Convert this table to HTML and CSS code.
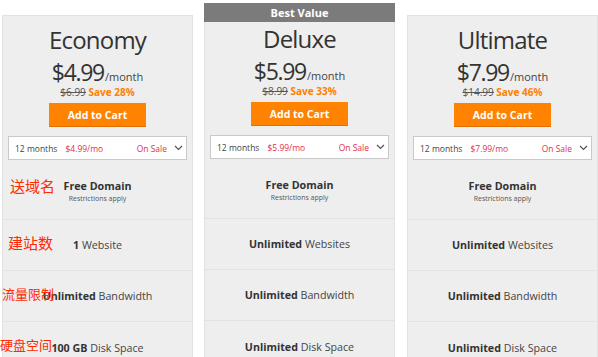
FILE: index.html
```html
<!DOCTYPE html>
<html lang="en">
<head>
<meta charset="utf-8">
<title>Hosting plans</title>
<link rel="stylesheet" href="styles.css">
</head>
<body>
<div class="plans">
  <section class="card">
    <div class="head">
      <h2 class="name">Economy</h2>
      <div class="price"><span class="amount">$4.99</span><span class="per">/month</span></div>
      <div class="was"><s>$6.99</s> <b>Save 28%</b></div>
      <button class="cart">Add to Cart</button>
      <div class="term"><span class="months">12 months</span><span class="mo">$4.99/mo</span><span class="sale">On Sale</span><svg class="chev" width="9" height="6" viewBox="0 0 9 6"><polyline points="1,1 4.5,4.5 8,1" fill="none" stroke="#555" stroke-width="1.2"/></svg></div>
    </div>
    <ul class="feats">
      <li class="feat"><b>Free Domain</b><small>Restrictions apply</small></li>
      <li class="feat"><span><b>1</b> Website</span></li>
      <li class="feat"><span><b>Unlimited</b> Bandwidth</span></li>
      <li class="feat"><span><b>100 GB</b> Disk Space</span></li>
    </ul>
    <span class="note n1">送域名</span>
    <span class="note n2">建站数</span>
    <span class="note n3">流量限制</span>
    <span class="note n4">硬盘空间</span>
  </section>
  <section class="card featured">
    <div class="badge">Best Value</div>
    <div class="head">
      <h2 class="name">Deluxe</h2>
      <div class="price"><span class="amount">$5.99</span><span class="per">/month</span></div>
      <div class="was"><s>$8.99</s> <b>Save 33%</b></div>
      <button class="cart">Add to Cart</button>
      <div class="term"><span class="months">12 months</span><span class="mo">$5.99/mo</span><span class="sale">On Sale</span><svg class="chev" width="9" height="6" viewBox="0 0 9 6"><polyline points="1,1 4.5,4.5 8,1" fill="none" stroke="#555" stroke-width="1.2"/></svg></div>
    </div>
    <ul class="feats">
      <li class="feat"><b>Free Domain</b><small>Restrictions apply</small></li>
      <li class="feat"><span><b>Unlimited</b> Websites</span></li>
      <li class="feat"><span><b>Unlimited</b> Bandwidth</span></li>
      <li class="feat"><span><b>Unlimited</b> Disk Space</span></li>
    </ul>
  </section>
  <section class="card">
    <div class="head">
      <h2 class="name">Ultimate</h2>
      <div class="price"><span class="amount">$7.99</span><span class="per">/month</span></div>
      <div class="was"><s>$14.99</s> <b>Save 46%</b></div>
      <button class="cart">Add to Cart</button>
      <div class="term"><span class="months">12 months</span><span class="mo">$7.99/mo</span><span class="sale">On Sale</span><svg class="chev" width="9" height="6" viewBox="0 0 9 6"><polyline points="1,1 4.5,4.5 8,1" fill="none" stroke="#555" stroke-width="1.2"/></svg></div>
    </div>
    <ul class="feats">
      <li class="feat"><b>Free Domain</b><small>Restrictions apply</small></li>
      <li class="feat"><span><b>Unlimited</b> Websites</span></li>
      <li class="feat"><span><b>Unlimited</b> Bandwidth</span></li>
      <li class="feat"><span><b>Unlimited</b> Disk Space</span></li>
    </ul>
  </section>
</div>
</body>
</html>
```
FILE: styles.css
```css
html, body {
  margin: 0;
  padding: 0;
  background: #fff;
  overflow: hidden;
}
body {
  font-family: "Open Sans", "Noto Sans", sans-serif;
  color: #333;
  width: 598px;
  height: 357px;
}
.plans {
  box-sizing: border-box;
  height: 357px;
  display: flex;
  align-items: stretch;
  gap: 11px;
  padding: 3px 0 0 2px;
}
.card {
  position: relative;
  width: 189px;
  margin-top: 12px;
  background: #eeeeee;
  border: 1px solid #e2e2e2;
  border-bottom: none;
  display: flex;
  flex-direction: column;
}
.card.featured {
  margin-top: 0;
}
.card + .card + .card {
  margin-left: 1px;
}
.badge {
  height: 19px;
  margin: -1px -1px 0;
  background: #7b7b7b;
  color: #fff;
  font-weight: 700;
  font-size: 11px;
  line-height: 19px;
  text-align: center;
}
.head {
  display: flex;
  flex-direction: column;
  align-items: center;
  padding-top: 9px;
}
.featured .head {
  padding-top: 2px;
}
.name {
  margin: 0;
  font-weight: 400;
  font-size: 24px;
  line-height: 30px;
  height: 30px;
  color: #333;
  letter-spacing: -0.8px;
}
.price {
  margin-top: 7px;
  line-height: 20px;
  height: 20px;
  white-space: nowrap;
}
.amount {
  font-size: 23px;
  letter-spacing: -1.3px;
}
.per {
  font-size: 11px;
  color: #444;
  margin-left: 1px;
}
.was {
  margin-top: 4px;
  font-size: 10px;
  line-height: 12px;
  color: #555;
}
.was b {
  color: #ff8000;
}
.cart {
  margin-top: 5px;
  width: 97px;
  height: 24px;
  border: none;
  border-bottom: 1px solid #e07000;
  background: #ff8300;
  color: #fff;
  font-family: inherit;
  font-weight: 700;
  font-size: 10.5px;
  padding: 0;
}
.term {
  margin: 9px 5px 0;
  align-self: stretch;
  height: 22px;
  background: #fff;
  border: 1px solid #c9c9c9;
  display: flex;
  align-items: center;
  font-size: 8.5px;
  padding: 0 3px 0 6px;
  white-space: nowrap;
}
.months {
  color: #444;
}
.mo {
  color: #e2304c;
  margin-left: 8px;
}
.sale {
  color: #e2304c;
  margin-left: auto;
}
.chev {
  margin-left: 7px;
}
.feats {
  list-style: none;
  margin: 8px 0 0;
  padding: 0;
  flex: 1;
  display: flex;
  flex-direction: column;
  min-height: 0;
}
.feat {
  flex: none;
  height: 50px;
  border-bottom: 1px solid #e2e2e2;
  display: flex;
  flex-direction: column;
  align-items: center;
  justify-content: center;
  font-size: 10.7px;
  color: #444;
  white-space: nowrap;
}
.feat b {
  color: #333;
}
.feat:first-child {
  justify-content: flex-start;
  padding-top: 11px;
  height: 40px;
}
.feat:last-child {
  flex: 1;
  height: auto;
  justify-content: flex-start;
  padding-top: 19px;
  border-bottom: none;
}
.feat small {
  font-size: 7px;
  color: #555;
  margin-top: 1px;
}
.note {
  position: absolute;
  color: #ff2a00;
  font-family: "Noto Sans CJK SC", sans-serif;
  white-space: nowrap;
  line-height: 1;
}
.n1 { left: 7px; top: 162px; font-size: 15px; }
.n2 { left: 5px; top: 219px; font-size: 15px; }
.n3 { left: -1px; top: 271px; font-size: 13px; }
.n4 { left: -3px; top: 322px; font-size: 13px; }
```
